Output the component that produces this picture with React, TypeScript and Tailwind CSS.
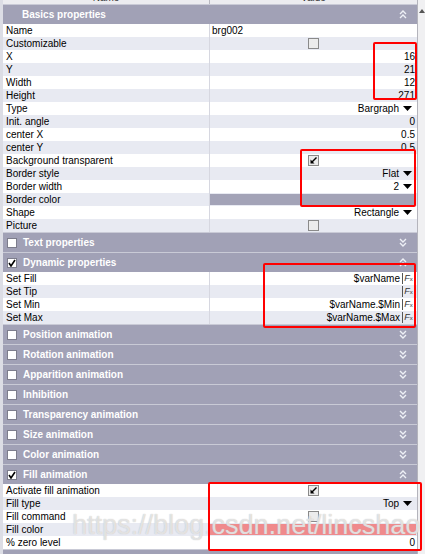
import React from "react";

const FONT = { fontFamily: '"Liberation Sans", Arial, sans-serif' };

type V =
  | { kind: "left"; text: string }
  | { kind: "num"; text: string }
  | { kind: "drop"; text: string }
  | { kind: "check"; checked: boolean }
  | { kind: "fx"; text: string }
  | { kind: "bar"; color: "gray" | "red" }
  | { kind: "none" };

function Triangle() {
  return (
    <svg width="9" height="5" viewBox="0 0 9 5" className="ml-[4px] mr-[5px]">
      <path d="M0 0 H9 L4.5 5 Z" fill="#000" />
    </svg>
  );
}

function ValueCheck({ checked }: { checked: boolean }) {
  return (
    <div className="w-[11px] h-[11px] border border-[#8a8a8a] bg-[#ececec] flex items-center justify-center">
      {checked && (
        <svg width="9" height="9" viewBox="0 0 9 9">
          <path d="M7.5 1.5 L3 6" stroke="#000" strokeWidth="1.4" fill="none" />
          <path d="M1.5 3.5 L1.5 7.5 L5.5 7.5 Z" fill="#000" />
        </svg>
      )}
    </div>
  );
}

function Fx() {
  return (
    <span className="ml-[2px] mr-[2px] h-[11px] w-[13px] border-l border-r border-[#555] flex items-center justify-center text-[9px] italic leading-none text-[#333]">
      F<span className="text-[6px] not-italic">x</span>
    </span>
  );
}

function Value({ v }: { v: V }) {
  switch (v.kind) {
    case "left":
      return <div className="flex-1 pl-[2px] leading-[13px]">{v.text}</div>;
    case "num":
      return <div className="flex-1 text-right pr-[2px] leading-[13px]">{v.text}</div>;
    case "drop":
      return (
        <div className="flex-1 flex items-center justify-end leading-[13px]">
          {v.text}
          <Triangle />
        </div>
      );
    case "check":
      return (
        <div className="flex-1 flex items-center justify-center">
          <ValueCheck checked={v.checked} />
        </div>
      );
    case "fx":
      return (
        <div className="flex-1 flex items-center justify-end leading-[13px]">
          {v.text}
          <Fx />
        </div>
      );
    case "bar":
      return (
        <div className="flex-1 flex items-center pr-[1px]">
          <div className={v.color === "gray" ? "h-[11px] w-full bg-[#a3a3b7]" : "h-[11px] w-full bg-[#f08a8c]"} />
        </div>
      );
    default:
      return <div className="flex-1" />;
  }
}

function Row({ label, v, i }: { label: string; v: V; i: number }) {
  return (
    <div className={i % 2 === 0 ? "flex h-[13px] bg-white" : "flex h-[13px] bg-[#e8eaf2]"}>
      <div className="w-[207px] pl-[3px] leading-[13px] border-r border-[#d6d7e0] whitespace-nowrap">{label}</div>
      <Value v={v} />
    </div>
  );
}

function Chevrons({ up }: { up: boolean }) {
  return (
    <svg width="8" height="9" viewBox="0 0 8 9" className="mr-[10px]">
      {up ? (
        <g stroke="#eef0f6" strokeWidth="1.4" fill="none">
          <path d="M1 4 L4 1 L7 4" />
          <path d="M1 8 L4 5 L7 8" />
        </g>
      ) : (
        <g stroke="#eef0f6" strokeWidth="1.4" fill="none">
          <path d="M1 1 L4 4 L7 1" />
          <path d="M1 5 L4 8 L7 5" />
        </g>
      )}
    </svg>
  );
}

function Header({ title, box, up }: { title: string; box: "none" | "on" | "off"; up: boolean }) {
  return (
    <div className="h-[20px] bg-[#a1a1b6] border-t border-[#c9cad6] flex items-center">
      {box === "none" ? (
        <div className="w-[19px]" />
      ) : (
        <div className="ml-[4px] mr-[6px] w-[10px] h-[10px] bg-white border border-[#7d7d8c] flex items-center justify-center">
          {box === "on" && (
            <svg width="8" height="8" viewBox="0 0 8 8">
              <path d="M1 4 L3 7 L7 1" stroke="#000" strokeWidth="1.6" fill="none" />
            </svg>
          )}
        </div>
      )}
      <div className="flex-1 text-white font-bold text-[10px] whitespace-nowrap">{title}</div>
      <Chevrons up={up} />
    </div>
  );
}

export default function App() {
  const basics: [string, V][] = [
    ["Name", { kind: "left", text: "brg002" }],
    ["Customizable", { kind: "check", checked: false }],
    ["X", { kind: "num", text: "16" }],
    ["Y", { kind: "num", text: "21" }],
    ["Width", { kind: "num", text: "12" }],
    ["Height", { kind: "num", text: "271" }],
    ["Type", { kind: "drop", text: "Bargraph" }],
    ["Init. angle", { kind: "num", text: "0" }],
    ["center X", { kind: "num", text: "0.5" }],
    ["center Y", { kind: "num", text: "0.5" }],
    ["Background transparent", { kind: "check", checked: true }],
    ["Border style", { kind: "drop", text: "Flat" }],
    ["Border width", { kind: "drop", text: "2" }],
    ["Border color", { kind: "bar", color: "gray" }],
    ["Shape", { kind: "drop", text: "Rectangle" }],
    ["Picture", { kind: "check", checked: false }],
  ];
  const dyn: [string, V][] = [
    ["Set Fill", { kind: "fx", text: "$varName" }],
    ["Set Tip", { kind: "fx", text: "" }],
    ["Set Min", { kind: "fx", text: "$varName.$Min" }],
    ["Set Max", { kind: "fx", text: "$varName.$Max" }],
  ];
  const fill: [string, V][] = [
    ["Activate fill animation", { kind: "check", checked: true }],
    ["Fill type", { kind: "drop", text: "Top" }],
    ["Fill command", { kind: "check", checked: false }],
    ["Fill color", { kind: "bar", color: "red" }],
    ["% zero level", { kind: "num", text: "0" }],
  ];

  return (
    <div className="relative w-[425px] h-[554px] overflow-hidden bg-[#dcdde5] text-[10px] text-black" style={FONT}>
      <div className="flex h-full">
        <div className="w-[417px] pl-[3px] flex flex-col">
          <div className="h-[4px] overflow-hidden flex bg-[#ececf0] text-[#333]">
            <div className="w-[207px] border-r border-[#b8b8c0] text-center leading-[4px] -mt-[4px]">Name</div>
            <div className="flex-1 text-center leading-[4px] -mt-[4px]">Value</div>
          </div>
          <Header title="Basics properties" box="none" up={true} />
          {basics.map(([l, v], i) => (
            <Row key={l} label={l} v={v} i={i} />
          ))}
          <Header title="Text properties" box="off" up={false} />
          <Header title="Dynamic properties" box="on" up={true} />
          {dyn.map(([l, v], i) => (
            <Row key={l} label={l} v={v} i={i} />
          ))}
          <Header title="Position animation" box="off" up={false} />
          <Header title="Rotation animation" box="off" up={false} />
          <Header title="Apparition animation" box="off" up={false} />
          <Header title="Inhibition" box="off" up={false} />
          <Header title="Transparency animation" box="off" up={false} />
          <Header title="Size animation" box="off" up={false} />
          <Header title="Color animation" box="off" up={false} />
          <Header title="Fill animation" box="on" up={true} />
          {fill.map(([l, v], i) => (
            <Row key={l} label={l} v={v} i={i} />
          ))}
          <div className="flex-1 bg-[#a1a1b6] border-t border-[#c9cad6]" />
        </div>
        <div className="flex-1 bg-[#f0f0f2] border-l border-[#b4b4bc] flex flex-col items-center pt-[9px]">
          <svg width="6" height="4" viewBox="0 0 6 4">
            <path d="M0 4 L3 0 L6 4 Z" fill="#555" />
          </svg>
        </div>
      </div>

      <div
        className="absolute left-[72px] top-[512px] text-[27px] leading-none whitespace-nowrap text-white/60 [text-shadow:0_0_1px_#b4b4b4]"
        style={FONT}
      >
        https://blog.csdn.net/lincshao
      </div>

      <div className="absolute left-[373px] top-[42px] w-[44px] h-[58px] border-2 border-[#ff0000] rounded-[2px]" />
      <div className="absolute left-[300px] top-[149px] w-[116px] h-[58px] border-2 border-[#ff0000] rounded-[2px]" />
      <div className="absolute left-[263px] top-[263px] w-[153px] h-[65px] border-2 border-[#ff0000] rounded-[2px]" />
      <div className="absolute left-[208px] top-[482px] w-[214px] h-[69px] border-2 border-[#ff0000] rounded-[2px]" />
    </div>
  );
}
